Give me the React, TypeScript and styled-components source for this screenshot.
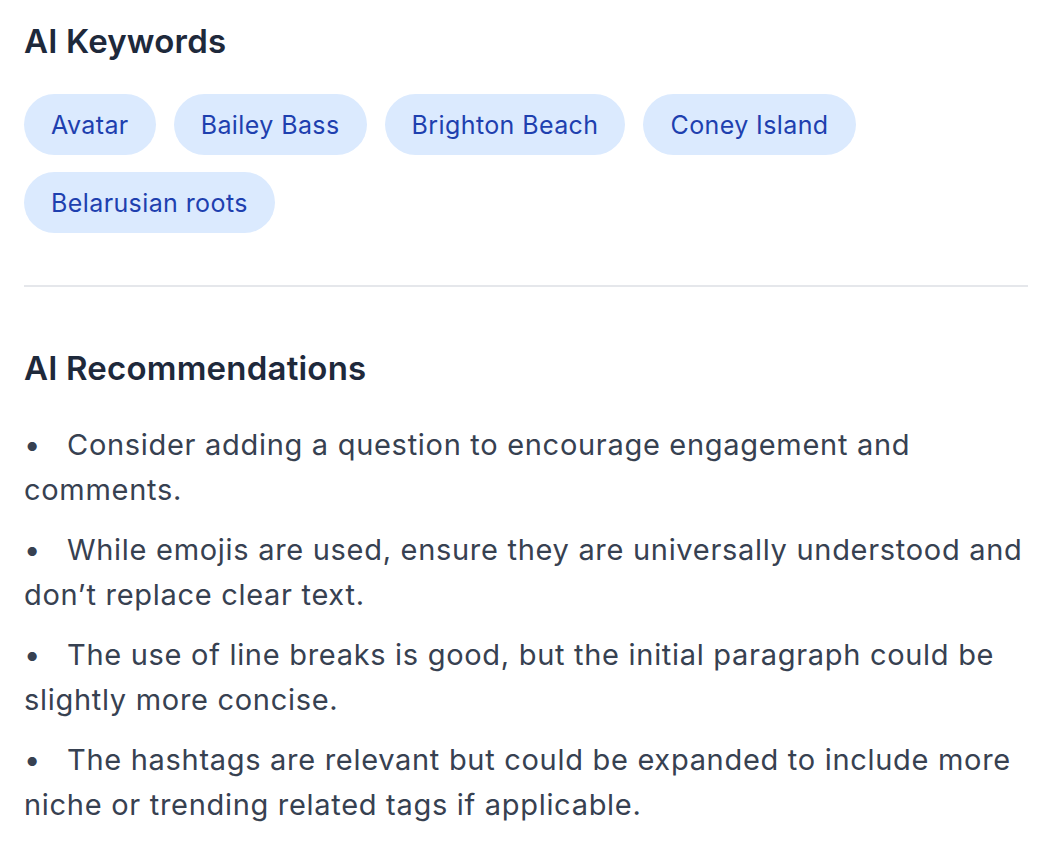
import React from 'react';
import styled, { createGlobalStyle } from 'styled-components';

const GlobalStyle = createGlobalStyle`
  body {
    margin: 0;
    background: #ffffff;
    font-family: Inter, 'Noto Sans', sans-serif;
  }
`;

const Page = styled.div`
  padding: 18px 22px 0 24px;
`;

const Section = styled.section`
  display: flex;
  flex-direction: column;
`;

const Title = styled.h2`
  margin: 0;
  font-size: 33px;
  line-height: 46px;
  font-weight: 600;
  color: #1e293b;
  letter-spacing: 0.2px;
`;

const ChipList = styled.div`
  display: flex;
  flex-wrap: wrap;
  gap: 17px 18px;
  margin-top: 30px;
`;

const Chip = styled.span`
  display: inline-flex;
  align-items: center;
  height: 61px;
  padding: 0 27px;
  border-radius: 31px;
  background: #dbeafe;
  color: #1e40af;
  font-size: 25px;
  letter-spacing: 0.4px;
`;

const Divider = styled.hr`
  margin: 52px 0 0;
  border: none;
  border-top: 2px solid #e5e7eb;
`;

const RecSection = styled(Section)`
  margin-top: 58px;
`;

const List = styled.ul`
  list-style: none;
  margin: 31px 0 0;
  padding: 0;
  display: flex;
  flex-direction: column;
  gap: 15px;
`;

const Item = styled.li`
  font-size: 29px;
  line-height: 45px;
  color: #374151;
  letter-spacing: 0.7px;

  &::before {
    content: '•';
    display: inline-block;
    width: 43px;
    color: #374151;
  }
`;

const keywords = ['Avatar', 'Bailey Bass', 'Brighton Beach', 'Coney Island', 'Belarusian roots'];

const recommendations = [
  'Consider adding a question to encourage engagement and comments.',
  'While emojis are used, ensure they are universally understood and don’t replace clear text.',
  'The use of line breaks is good, but the initial paragraph could be slightly more concise.',
  'The hashtags are relevant but could be expanded to include more niche or trending related tags if applicable.',
];

const App = () => {
  return (
    <>
      <GlobalStyle />
      <Page>
        <Section>
          <Title>AI Keywords</Title>
          <ChipList>
            {keywords.map((k) => (
              <Chip key={k}>{k}</Chip>
            ))}
          </ChipList>
        </Section>
        <Divider />
        <RecSection>
          <Title>AI Recommendations</Title>
          <List>
            {recommendations.map((r) => (
              <Item key={r}>{r}</Item>
            ))}
          </List>
        </RecSection>
      </Page>
    </>
  );
};

export default App;
